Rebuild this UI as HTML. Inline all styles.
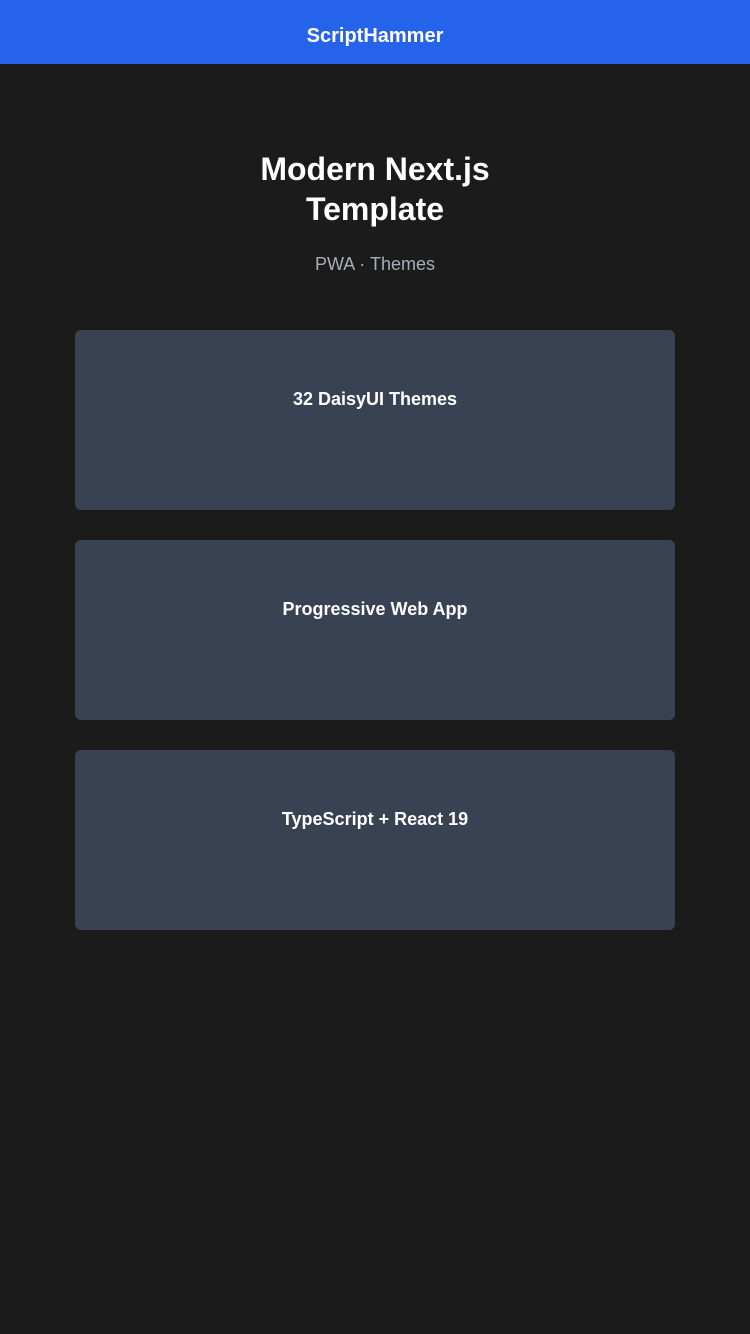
<!DOCTYPE html>
<html><head><meta charset="utf-8"><style>
*{margin:0;padding:0;box-sizing:border-box}
body{width:750px;height:1334px;background:#1b1b1b;font-family:"Liberation Sans",sans-serif;color:#fff;overflow:hidden}
.hdr{height:64px;background:#2563eb;text-align:center;line-height:72px;font-weight:bold;font-size:20px}
h1{text-align:center;font-size:32px;line-height:40px;margin-top:85px;font-weight:bold}
.sub{text-align:center;color:#a6adbb;font-size:18px;margin-top:25px}
.card{position:absolute;left:75px;width:600px;height:180px;background:#394253;border-radius:6px;text-align:center;font-weight:bold;font-size:18px;padding-top:59px}
</style></head><body>
<div class="hdr">ScriptHammer</div>
<h1>Modern Next.js<br>Template</h1>
<div class="sub">PWA · Themes</div>
<div class="card" style="top:330px">32 DaisyUI Themes</div>
<div class="card" style="top:540px">Progressive Web App</div>
<div class="card" style="top:750px">TypeScript + React 19</div>
</body></html>
